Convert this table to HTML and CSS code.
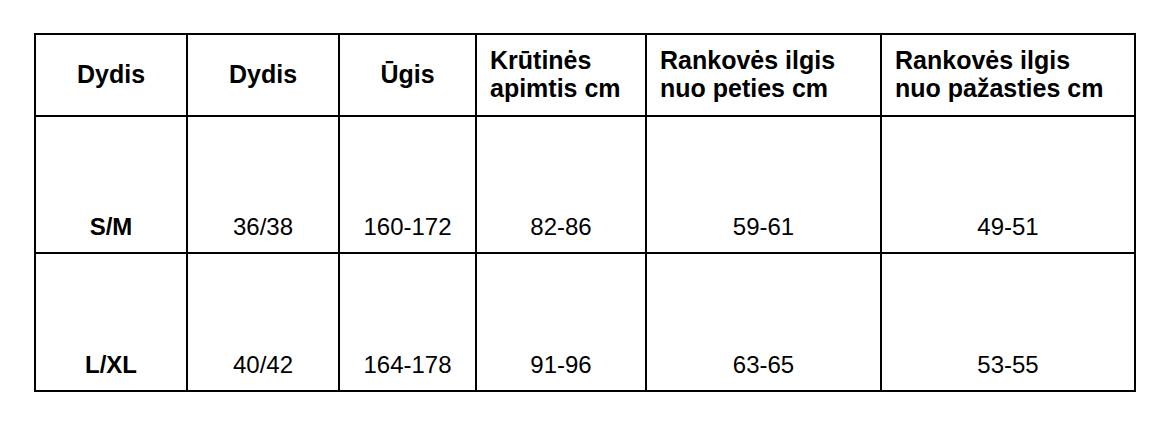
FILE: index.html
```html
<!DOCTYPE html>
<html lang="lt">
<head>
<meta charset="utf-8">
<title>Dydžių lentelė</title>
<link rel="stylesheet" href="styles.css">
</head>
<body>
<div class="table" role="table">
  <div class="cell head center" role="columnheader">Dydis</div>
  <div class="cell head center" role="columnheader">Dydis</div>
  <div class="cell head center" role="columnheader">Ūgis</div>
  <div class="cell head left" role="columnheader">Krūtinės<br>apimtis cm</div>
  <div class="cell head left" role="columnheader">Rankovės ilgis<br>nuo peties cm</div>
  <div class="cell head left" role="columnheader">Rankovės ilgis<br>nuo pažasties cm</div>

  <div class="cell data strong" role="cell">S/M</div>
  <div class="cell data" role="cell">36/38</div>
  <div class="cell data" role="cell">160-172</div>
  <div class="cell data" role="cell">82-86</div>
  <div class="cell data" role="cell">59-61</div>
  <div class="cell data" role="cell">49-51</div>

  <div class="cell data strong" role="cell">L/XL</div>
  <div class="cell data" role="cell">40/42</div>
  <div class="cell data" role="cell">164-178</div>
  <div class="cell data" role="cell">91-96</div>
  <div class="cell data" role="cell">63-65</div>
  <div class="cell data" role="cell">53-55</div>
</div>
</body>
</html>
```
FILE: styles.css
```css
html, body {
  margin: 0;
  padding: 0;
  background: #ffffff;
}

body {
  padding: 33px 0 0 34px;
  font-family: "Liberation Sans", Arial, sans-serif;
  color: #000000;
}

.table {
  display: grid;
  grid-template-columns: 150px 150px 135px 168px 233px 252px;
  grid-template-rows: 80px 135px 136px;
  gap: 2px;
  padding: 2px;
  background: #000000;
  width: max-content;
}

.cell {
  background: #ffffff;
  display: flex;
  font-size: 24px;
}

.head {
  font-size: 25px;
  font-weight: bold;
  line-height: 28px;
  align-items: center;
  padding-bottom: 3px;
}

.head.center {
  justify-content: center;
  text-align: center;
}

.head.left {
  justify-content: flex-start;
  text-align: left;
  padding-left: 13px;
}

.data {
  align-items: flex-end;
  justify-content: center;
  padding-bottom: 11px;
  line-height: normal;
}

.strong {
  font-weight: bold;
}
```
